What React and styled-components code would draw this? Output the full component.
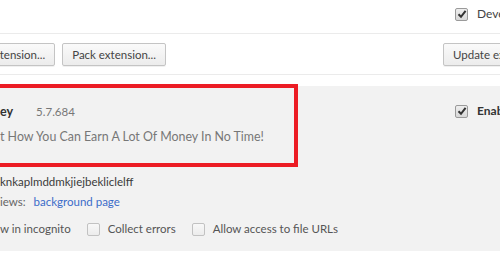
import React from 'react';
import styled, { createGlobalStyle } from 'styled-components';

const Global = createGlobalStyle`
  html, body {
    margin: 0;
    padding: 0;
    background: #fff;
    overflow: hidden;
  }
  body {
    font-family: Lato, 'Open Sans', sans-serif;
    font-size: 11.5px;
    line-height: 16px;
    color: #333;
  }
`;

const Check = ({ checked }) => (
  <St.Box $checked={checked}>
    {checked && (
      <svg width="10" height="10" viewBox="0 0 10 10">
        <path d="M1.5 5.2 L4 7.8 L8.6 1.8" fill="none" stroke="#333" strokeWidth="2" />
      </svg>
    )}
  </St.Box>
);

const App = () => (
  <St.Page>
    <Global />
    <St.TopBar>
      <Check checked />
      <St.Label>Developer mode</St.Label>
    </St.TopBar>

    <St.Toolbar>
      <St.ButtonGroup>
        <St.Button>Load unpacked extension...</St.Button>
        <St.Button>Pack extension...</St.Button>
      </St.ButtonGroup>
      <St.Button>Update extensions now</St.Button>
    </St.Toolbar>

    <St.Card>
      <St.Details>
        <St.Highlight>
          <St.NameRow>
            <St.Name>ey</St.Name>
            <St.Version>5.7.684</St.Version>
          </St.NameRow>
          <St.Description>t How You Can Earn A Lot Of Money In No Time!</St.Description>
        </St.Highlight>
        <St.Id>knkaplmddmkjiejbekliclelff</St.Id>
        <St.Views>
          iews: <St.Link>background page</St.Link>
        </St.Views>
        <St.Options>
          <St.Option>w in incognito</St.Option>
          <St.Option>
            <Check />
            Collect errors
          </St.Option>
          <St.Option>
            <Check />
            Allow access to file URLs
          </St.Option>
        </St.Options>
      </St.Details>
      <St.EnableCol>
        <Check checked />
        <St.Bold>Enabled</St.Bold>
      </St.EnableCol>
    </St.Card>
  </St.Page>
);

export default App;

const St = {
  Page: styled.div`
    width: 500px;
    height: 280px;
    overflow: hidden;
    white-space: nowrap;
  `,

  TopBar: styled.div`
    display: flex;
    align-items: center;
    gap: 9px;
    height: 28px;
    padding-bottom: 5px;
    padding-left: 455px;
    border-bottom: 1px solid #ebebeb;
  `,

  Label: styled.span`
    color: #444;
    font-size: 12px;
  `,

  Toolbar: styled.div`
    display: grid;
    grid-template-columns: 443px max-content;
    align-items: center;
    height: 40px;
    border-bottom: 1px solid #ebebeb;
  `,

  ButtonGroup: styled.div`
    display: flex;
    justify-content: flex-end;
    gap: 7px;
    width: 166px;
  `,

  Button: styled.button`
    height: 23px;
    padding: 0 9px;
    border: 1px solid #c4c4c4;
    border-radius: 2px;
    background: linear-gradient(#fafafa, #ececec);
    box-shadow: 0 1px 0 rgba(0, 0, 0, 0.06);
    font-family: inherit;
    font-size: 11.5px;
    color: #444;
    white-space: nowrap;
    flex-shrink: 0;
  `,

  Card: styled.div`
    display: grid;
    grid-template-columns: 455px 1fr;
    margin-top: 11px;
    height: 165px;
    background: #f2f2f2;
  `,

  Details: styled.div`
    display: flex;
    flex-direction: column;
  `,

  Highlight: styled.div`
    width: 294px;
    height: 75px;
    margin: -2px 0 0 -20px;
    padding-left: 20px;
    border: 4px solid #ec1c24;
    border-left: none;
    display: flex;
    flex-direction: column;
  `,

  NameRow: styled.div`
    display: flex;
    align-items: baseline;
    gap: 23px;
    margin-top: 16px;
  `,

  Name: styled.span`
    font-weight: 700;
    font-size: 12.5px;
    color: #333;
  `,

  Version: styled.span`
    color: #777;
    font-size: 11.5px;
  `,

  Description: styled.div`
    margin-top: 9px;
    color: #777;
    font-size: 12.4px;
  `,

  Id: styled.div`
    margin-top: 7px;
    color: #3a3a3a;
  `,

  Views: styled.div`
    margin-top: 4px;
    color: #666;
  `,

  Link: styled.a`
    margin-left: 5px;
    color: #3b6cc9;
  `,

  Options: styled.div`
    display: flex;
    align-items: center;
    gap: 16px;
    margin-top: 11px;
    color: #555;
  `,

  Option: styled.label`
    display: flex;
    align-items: center;
    gap: 8px;
  `,

  Box: styled.span`
    display: inline-flex;
    align-items: center;
    justify-content: center;
    width: 11px;
    height: 11px;
    border: 1px solid ${({ $checked }) => ($checked ? '#9a9a9a' : '#c2c2c2')};
    border-radius: 2px;
    background: ${({ $checked }) => ($checked ? 'linear-gradient(#eee, #d8d8d8)' : 'linear-gradient(#f8f8f8, #ececec)')};
    flex-shrink: 0;
  `,

  EnableCol: styled.div`
    display: flex;
    align-items: center;
    align-self: start;
    gap: 9px;
    margin-top: 17px;
  `,

  Bold: styled.span`
    font-weight: 700;
    color: #333;
    font-size: 12px;
  `,
};
